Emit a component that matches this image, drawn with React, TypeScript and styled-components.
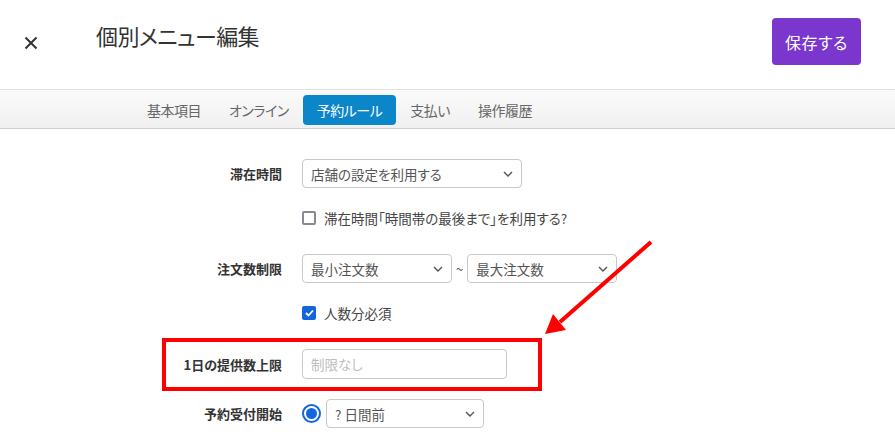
import React from "react";
import styled, { createGlobalStyle } from "styled-components";

const Global = createGlobalStyle`
  html, body { margin: 0; padding: 0; background: #fff; }
  body { font-family: "Noto Sans CJK JP", "Noto Sans", sans-serif; color: #333; }
  * { box-sizing: border-box; }
`;

const Page = styled.div`
  position: relative;
  width: 895px;
  height: 432px;
  overflow: hidden;
  font-feature-settings: "palt";
`;

const Header = styled.header`
  height: 89px;
  display: flex;
  align-items: flex-start;
  padding: 0 34px 0 24px;
`;

const CloseButton = styled.button`
  width: 14px;
  height: 14px;
  margin-top: 36px;
  padding: 0;
  border: none;
  background: none;
  display: flex;
  cursor: pointer;
`;

const Title = styled.h1`
  margin: 19px 0 0 58px;
  font-size: 22px;
  line-height: 32px;
  font-weight: 400;
  color: #333;
  letter-spacing: -0.6px;
`;

const SaveButton = styled.button`
  margin: 18px 0 0 auto;
  width: 89px;
  height: 47px;
  border: none;
  border-radius: 4px;
  background: #7b36cd;
  color: #fff;
  font-family: inherit;
  font-feature-settings: "palt";
  font-size: 16px;
  letter-spacing: 0.5px;
`;

const TabBar = styled.nav`
  height: 40px;
  border-top: 1px solid #e0e0e0;
  border-bottom: 1px solid #cfcfcf;
  background: linear-gradient(#fbfbfb, #f0f0f0);
  display: flex;
  align-items: flex-start;
  padding: 5px 0 0 133px;
`;

const Tab = styled.div<{ $active?: boolean }>`
  height: 30px;
  padding: 0 14px;
  display: flex;
  align-items: center;
  border-radius: 4px;
  font-size: 14px;
  letter-spacing: -0.5px;
  color: ${(p) => (p.$active ? "#fff" : "#666")};
  background: ${(p) => (p.$active ? "#0b86c8" : "transparent")};
`;

const Form = styled.div`
  padding-top: 30px;
  display: flex;
  flex-direction: column;
`;

const Row = styled.div<{ $mt?: number; $h: number }>`
  display: flex;
  align-items: center;
  gap: 20px;
  height: ${(p) => p.$h}px;
  margin-top: ${(p) => p.$mt ?? 0}px;
`;

const Label = styled.div`
  width: 282px;
  text-align: right;
  font-size: 13px;
  font-weight: 700;
  color: #333;
`;

const Controls = styled.div`
  display: flex;
  align-items: center;
  gap: 4px;
`;

const SelectWrap = styled.div<{ $w: number; $h?: number }>`
  position: relative;
  width: ${(p) => p.$w}px;
  height: ${(p) => p.$h ?? 29}px;
`;

const SelectBox = styled.select`
  appearance: none;
  width: 100%;
  height: 100%;
  border: 1px solid #c8c8c8;
  border-radius: 4px;
  background: #fff;
  padding: 0 24px 0 8px;
  font-family: inherit;
  font-feature-settings: "palt";
  font-size: 13.5px;
  color: #555;
  outline: none;
`;

const Chevron = styled.svg`
  position: absolute;
  right: 9px;
  top: 50%;
  width: 10px;
  height: 6px;
  margin-top: -3px;
  pointer-events: none;
`;

const Tilde = styled.span`
  font-size: 13px;
  color: #555;
`;

const TextInput = styled.input`
  width: 205px;
  height: 30px;
  border: 1px solid #c8c8c8;
  border-radius: 4px;
  padding: 0 8px;
  font-family: inherit;
  font-feature-settings: "palt";
  font-size: 13.5px;
  color: #555;
  outline: none;
  &::placeholder { color: #bdbdbd; }
`;

const CheckLabel = styled.label`
  display: flex;
  align-items: center;
  gap: 8px;
  font-size: 13.5px;
  color: #444;
`;

const CheckBox = styled.span<{ $checked?: boolean }>`
  width: 14px;
  height: 14px;
  border-radius: 2px;
  display: flex;
  align-items: center;
  justify-content: center;
  border: ${(p) => (p.$checked ? "none" : "2px solid #8a8a94")};
  background: ${(p) => (p.$checked ? "#1466e0" : "#fff")};
`;

const Radio = styled.span`
  width: 19px;
  height: 19px;
  border-radius: 50%;
  border: 2px solid #1466e0;
  display: flex;
  align-items: center;
  justify-content: center;
  margin-right: 1px;
  &::after {
    content: "";
    width: 11px;
    height: 11px;
    border-radius: 50%;
    background: #1466e0;
  }
`;

const Highlight = styled.div`
  position: absolute;
  left: 162px;
  top: 338px;
  width: 380px;
  height: 53px;
  border: 4px solid #ff0000;
  pointer-events: none;
`;

const ArrowSvg = styled.svg`
  position: absolute;
  left: 0;
  top: 0;
  pointer-events: none;
`;

const Select: React.FC<{ w: number; value: string; h?: number }> = ({ w, value, h }) => (
  <SelectWrap $w={w} $h={h}>
    <SelectBox defaultValue={value}>
      <option>{value}</option>
    </SelectBox>
    <Chevron viewBox="0 0 10 6">
      <path d="M1 1l4 4 4-4" fill="none" stroke="#555" strokeWidth="1.4" />
    </Chevron>
  </SelectWrap>
);

export default function App() {
  return (
    <Page>
      <Global />
      <Header>
        <CloseButton aria-label="close">
          <svg width="14" height="14" viewBox="0 0 14 14">
            <path d="M1.5 1.5l11 11M12.5 1.5l-11 11" stroke="#333" strokeWidth="2" />
          </svg>
        </CloseButton>
        <Title>個別メニュー編集</Title>
        <SaveButton>保存する</SaveButton>
      </Header>
      <TabBar>
        <Tab>基本項目</Tab>
        <Tab>オンライン</Tab>
        <Tab $active>予約ルール</Tab>
        <Tab>支払い</Tab>
        <Tab>操作履歴</Tab>
      </TabBar>
      <Form>
        <Row $h={29}>
          <Label>滞在時間</Label>
          <Select w={220} value="店舗の設定を利用する" />
        </Row>
        <Row $h={26} $mt={17}>
          <Label />
          <CheckLabel>
            <CheckBox />
            滞在時間「時間帯の最後まで」を利用する?
          </CheckLabel>
        </Row>
        <Row $h={29} $mt={23}>
          <Label>注文数制限</Label>
          <Controls>
            <Select w={150} value="最小注文数" />
            <Tilde>~</Tilde>
            <Select w={150} value="最大注文数" />
          </Controls>
        </Row>
        <Row $h={26} $mt={17}>
          <Label />
          <CheckLabel>
            <CheckBox $checked>
              <svg width="9" height="8" viewBox="0 0 9 8">
                <path d="M1 4l2.5 2.5L8 1.5" fill="none" stroke="#fff" strokeWidth="1.8" />
              </svg>
            </CheckBox>
            人数分必須
          </CheckLabel>
        </Row>
        <Row $h={30} $mt={23}>
          <Label>1日の提供数上限</Label>
          <TextInput placeholder="制限なし" />
        </Row>
        <Row $h={29} $mt={20}>
          <Label>予約受付開始</Label>
          <Controls>
            <Radio />
            <Select w={158} value="? 日間前" />
          </Controls>
        </Row>
      </Form>
      <Highlight />
      <ArrowSvg width="895" height="432" viewBox="0 0 895 432">
        <line x1="651" y1="242" x2="560" y2="322" stroke="#ff0000" strokeWidth="4" />
        <polygon points="545,334 553,314 566,330" fill="#ff0000" />
      </ArrowSvg>
    </Page>
  );
}
